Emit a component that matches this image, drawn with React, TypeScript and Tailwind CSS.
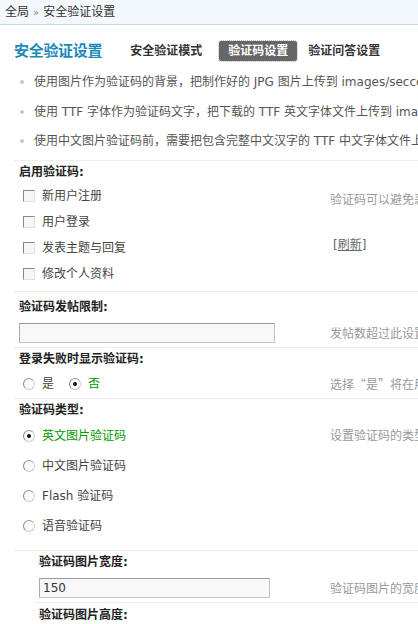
import React from "react";

const Checkbox = () => (
  <span className="inline-block w-[12px] h-[12px] border border-t-[#888] border-l-[#888] border-b-[#e0e0e0] border-r-[#e0e0e0] bg-[#f6f6f6]" />
);

const Radio = ({ checked }: { checked?: boolean }) => (
  <span className="relative inline-block w-[12px] h-[12px] rounded-full border border-[#cfcfcf] border-l-[#888] border-t-[#999] bg-[#fafafa]">
    {checked && (
      <span className="absolute left-[3px] top-[3px] w-[4px] h-[4px] rounded-full bg-[#111]" />
    )}
  </span>
);

const tips = [
  "使用图片作为验证码的背景，把制作好的 JPG 图片上传到 images/seccode/background/ 目录",
  "使用 TTF 字体作为验证码文字，把下载的 TTF 英文字体文件上传到 images/seccode/font/en/ 目录",
  "使用中文图片验证码前，需要把包含完整中文汉字的 TTF 中文字体文件上传到 images/seccode/font/ch/ 目录",
];

const Header = ({ label, h }: { label: string; h: string }) => (
  <div className={`flex items-center border-t border-[#eeeeee] pl-[5px] font-bold text-[#222] ${h}`}>
    {label}
  </div>
);

const Row = ({
  children,
  tip,
  className = "",
}: {
  children: React.ReactNode;
  tip?: React.ReactNode;
  className?: string;
}) => (
  <div className={`flex ${className}`}>
    <div className="w-[311px] shrink-0 pl-[5px]">{children}</div>
    <div className="pl-[5px] text-[#999] whitespace-nowrap">{tip}</div>
  </div>
);

export default function App() {
  const checks = ["新用户注册", "用户登录", "发表主题与回复", "修改个人资料"];
  const types = ["英文图片验证码", "中文图片验证码", "Flash 验证码", "语音验证码"];

  return (
    <div className="w-[418px] h-[624px] overflow-hidden bg-white text-[12px] text-[#333] font-['DejaVu_Sans','Noto_Sans_CJK_SC',sans-serif] whitespace-nowrap">
      {/* breadcrumb */}
      <div className="h-[25px] flex items-center pl-[5px] bg-[#f2f8fb] border-b border-[#c0dbe2] text-[#333]">
        全局 <span className="mx-[4px] text-[#888] text-[10px]">»</span> 安全验证设置
      </div>

      {/* title + tabs */}
      <div className="mt-[16px] h-[20px] flex items-center pl-[14px]">
        <span className="text-[15px] font-bold text-[#1c8ab9] tracking-[-0.3px]">安全验证设置</span>
        <span className="ml-[28px] font-bold text-[#333]">安全验证模式</span>
        <span className="ml-[17px] h-[20px] px-[9px] flex items-center bg-[#666] text-white font-bold rounded-[2px] outline outline-dotted outline-[#bbb]">
          验证码设置
        </span>
        <span className="ml-[11px] font-bold text-[#333]">验证问答设置</span>
      </div>

      {/* tips */}
      <div className="mt-[6px]">
        {tips.map((t, i) => (
          <div
            key={i}
            className={`flex items-center pl-[20px] text-[#555] ${i === 2 ? "h-[28px]" : "h-[30px]"}`}
          >
            <span className="shrink-0 w-[4px] h-[4px] rounded-full bg-[#c8c8c8] mr-[10px]" />
            {t}
          </div>
        ))}
      </div>

      {/* settings table */}
      <div className="mt-[5px] ml-[14px] w-[600px]">
        <Header label="启用验证码:" h="h-[23px]" />
        <Row
          className="pb-[4px]"
          tip={
            <div className="flex flex-col items-start">
              <span className="mt-[8px]">验证码可以避免恶意注册及恶意灌水</span>
              <a className="mt-[27px] ml-[3px] text-[#666] underline">[刷新]</a>
            </div>
          }
        >
          {checks.map((c) => (
            <div key={c} className="h-[26px] flex items-center">
              <span className="ml-[4px] mr-[7px] flex">
                <Checkbox />
              </span>
              <span className="text-[#444]">{c}</span>
            </div>
          ))}
        </Row>

        <Header label="验证码发帖限制:" h="h-[31px]" />
        <Row className="h-[25px]" tip={<span className="block mt-[3px]">发帖数超过此设置的用户将不受验证码功能限制</span>}>
          <div className="mt-[1px] w-[256px] h-[20px] border border-[#c4c4c4] border-t-[#999] border-l-[#aaa] bg-[#f8f8f8]" />
        </Row>

        <Header label="登录失败时显示验证码:" h="h-[23px]" />
        <Row
          className="h-[28px] items-center"
          tip={
            <span>
              选择<span className="font-['Noto_Sans_CJK_SC']">“是”</span>将在用户登录失败时显示验证码
            </span>
          }
        >
          <div className="h-[28px] flex items-center">
            <span className="ml-[4px] mr-[7px] flex">
              <Radio />
            </span>
            <span className="text-[#444]">是</span>
            <span className="ml-[15px] mr-[7px] flex">
              <Radio checked />
            </span>
            <span className="text-[#090]">否</span>
          </div>
        </Row>

        <Header label="验证码类型:" h="h-[23px]" />
        <Row className="pb-[9px]" tip={<span className="block h-[30px] leading-[30px]">设置验证码的类型</span>}>
          {types.map((t, i) => (
            <div key={t} className="h-[30px] flex items-center">
              <span className="ml-[4px] mr-[7px] flex">
                <Radio checked={i === 0} />
              </span>
              <span className={i === 0 ? "text-[#090]" : "text-[#444]"}>{t}</span>
            </div>
          ))}
        </Row>

        <div className="border-t border-[#eeeeee]">
          <div className="ml-[20px]">
            <div className="flex items-center h-[22px] pl-[5px] font-bold text-[#222]">验证码图片宽度:</div>
            <div className="flex h-[29px]">
              <div className="w-[291px] shrink-0 pl-[5px] pt-[5px]">
                <div className="w-[231px] h-[20px] flex items-center pl-[3px] border border-[#c4c4c4] border-t-[#999] border-l-[#aaa] bg-[#f8f8f8] text-[#333]">
                  150
                </div>
              </div>
              <div className="pl-[5px] text-[#999] flex items-center pt-[3px]">验证码图片的宽度，范围在 100~200 之间</div>
            </div>
            <div className="flex items-center h-[24px] pl-[5px] border-t border-[#eeeeee] font-bold text-[#222]">
              验证码图片高度:
            </div>
          </div>
        </div>
      </div>
    </div>
  );
}
